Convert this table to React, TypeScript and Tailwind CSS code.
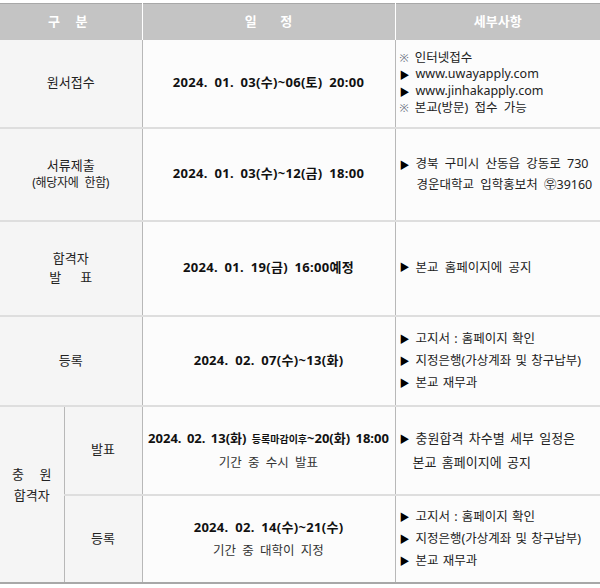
import type { ReactNode } from 'react';

const font = { fontFamily: '"Noto Sans", "Noto Sans CJK KR", sans-serif' };

const Bullet = ({ mark = '▶', children }: { mark?: string; children: ReactNode }) => (
  <div className="flex items-start gap-[6px]">
    <span className={mark === '▶' ? 'text-[10px] text-black pt-[1px]' : 'text-[11px] text-gray-500'}>{mark}</span>
    <span>{children}</span>
  </div>
);

const Date = ({ children }: { children: ReactNode }) => (
  <div className="font-bold text-[13px] text-[#111] tracking-[0.3px]">{children}</div>
);

export default function App() {
  const label = 'bg-[#f5f5f5] text-center text-[13px] text-[#222] border-r border-[#b8b8b8]';
  const mid = 'text-center border-r border-[#b8b8b8]';
  const detail = 'pl-[4px] text-[12.5px] text-[#222] align-middle';
  const row = 'border-b-2 border-[#dedede]';

  return (
    <div className="w-[600px] h-[588px] bg-white pt-[3px]" style={font}>
      <table className="w-full border-collapse table-fixed">
        <colgroup>
          <col className="w-[64px]" />
          <col className="w-[78px]" />
          <col className="w-[253px]" />
          <col />
        </colgroup>
        <thead>
          <tr className="h-[36px] bg-[#c4c4c4] text-white font-bold text-[13px] border-t border-[#a8a8a8]">
            <th colSpan={2} className="border-r border-white tracking-[6px]">구 분</th>
            <th className="border-r border-white">일&nbsp;&nbsp;&nbsp;&nbsp;&nbsp;&nbsp;&nbsp;정</th>
            <th>세부사항</th>
          </tr>
        </thead>
        <tbody className="bg-[#fcfcfc] [word-spacing:3px]">
          <tr className={`h-[88px] ${row}`}>
            <td colSpan={2} className={label}>원서접수</td>
            <td className={mid}><Date>2024. 01. 03(수)~06(토) 20:00</Date></td>
            <td className={`${detail} leading-[16px]`}>
              <Bullet mark="※">인터넷접수</Bullet>
              <Bullet>www.uwayapply.com</Bullet>
              <Bullet>www.jinhakapply.com</Bullet>
              <Bullet mark="※">본교(방문) 접수 가능</Bullet>
            </td>
          </tr>
          <tr className={`h-[93px] ${row}`}>
            <td colSpan={2} className={`${label} leading-[17px]`}>
              <div>서류제출</div>
              <div className="text-[12px] tracking-[-0.3px]">(해당자에 한함)</div>
            </td>
            <td className={mid}><Date>2024. 01. 03(수)~12(금) 18:00</Date></td>
            <td className={`${detail} leading-[20px]`}>
              <Bullet>경북 구미시 산동읍 강동로 730</Bullet>
              <div className="pl-[17px]">경운대학교 입학홍보처 ㉾39160</div>
            </td>
          </tr>
          <tr className={`h-[95px] ${row}`}>
            <td colSpan={2} className={`${label} leading-[19px]`}>
              <div>합격자</div>
              <div>발&nbsp;&nbsp;&nbsp;표</div>
            </td>
            <td className={mid}><Date>2024. 01. 19(금) 16:00예정</Date></td>
            <td className={detail}>
              <Bullet>본교 홈페이지에 공지</Bullet>
            </td>
          </tr>
          <tr className={`h-[90px] ${row}`}>
            <td colSpan={2} className={label}>등록</td>
            <td className={mid}><Date>2024. 02. 07(수)~13(화)</Date></td>
            <td className={`${detail} leading-[21px] [word-spacing:1px]`}>
              <Bullet>고지서 : 홈페이지 확인</Bullet>
              <Bullet>지정은행(가상계좌 및 창구납부)</Bullet>
              <Bullet>본교 재무과</Bullet>
            </td>
          </tr>
          <tr className={`h-[89px] ${row}`}>
            <td rowSpan={2} className={`${label} leading-[21px] pb-[18px] border-b-2 border-b-[#a8a8a8]`}>
              <div className="tracking-[5px] pl-[5px] [word-spacing:2px]">충 원</div>
              <div>합격자</div>
            </td>
            <td className={label}>발표</td>
            <td className={`${mid} leading-[23px]`}>
              <div className="font-bold text-[13px] text-[#111] whitespace-nowrap [word-spacing:2px]">
                2024. 02. 13(화) <span className="text-[10px] [word-spacing:0px]">등록마감이후</span>~20(화) 18:00
              </div>
              <div className="text-[12.5px] text-[#333]">기간 중 수시 발표</div>
            </td>
            <td className={`${detail} leading-[23px] text-[13px] [word-spacing:2px]`}>
              <Bullet>충원합격 차수별 세부 일정은</Bullet>
              <div className="pl-[13px]">본교 홈페이지에 공지</div>
            </td>
          </tr>
          <tr className="h-[88px] border-b-2 border-[#a8a8a8]">
            <td className={label}>등록</td>
            <td className={`${mid} leading-[23px]`}>
              <Date>2024. 02. 14(수)~21(수)</Date>
              <div className="text-[12.5px] text-[#333]">기간 중 대학이 지정</div>
            </td>
            <td className={`${detail} leading-[21px] [word-spacing:1px]`}>
              <Bullet>고지서 : 홈페이지 확인</Bullet>
              <Bullet>지정은행(가상계좌 및 창구납부)</Bullet>
              <Bullet>본교 재무과</Bullet>
            </td>
          </tr>
        </tbody>
      </table>
    </div>
  );
}
